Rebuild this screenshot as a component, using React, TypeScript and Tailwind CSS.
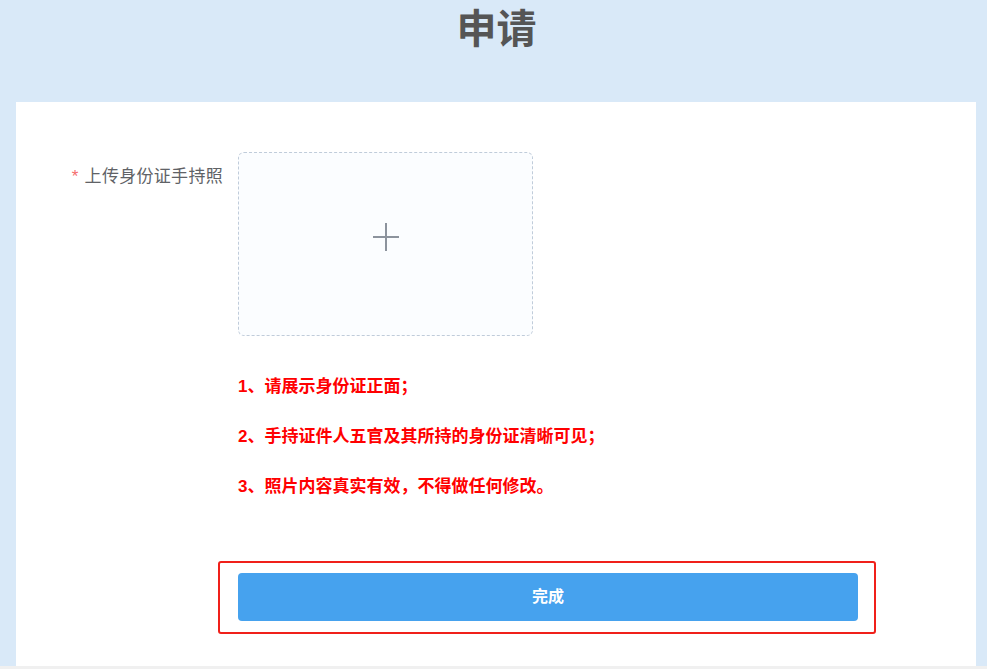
const tips = [
  '1、请展示身份证正面；',
  '2、手持证件人五官及其所持的身份证清晰可见；',
  '3、照片内容真实有效，不得做任何修改。',
]

function PlusMark() {
  return (
    <svg width="28" height="28" viewBox="0 0 28 28" className="-mt-[14px]">
      <path d="M14 0v28M1 14h26" stroke="#8c939d" strokeWidth="2" fill="none" />
    </svg>
  )
}

export default function App() {
  return (
    <div
      className="flex h-[669px] w-full flex-col bg-[#d9e9f8]"
      style={{ fontFamily: '"Liberation Sans", "Noto Sans CJK SC", sans-serif' }}
    >
      <header className="flex h-[102px] shrink-0 justify-center pl-[6px] pt-[7px]">
        <h1 className="text-[40px] font-bold leading-[44px] text-[#555555]">申请</h1>
      </header>

      <main className="ml-4 mr-[11px] h-[564px] bg-white pt-[50px]">
        <div className="flex">
          <label className="w-[222px] shrink-0 pr-[15px] pt-[14px] text-right text-[17px] leading-[22px] tracking-[0.3px] text-[#606266]">
            <span className="mr-[6px] text-[#f56c6c]">*</span>
            上传身份证手持照
          </label>

          <div className="flex flex-col">
            <button className="flex h-[184px] w-[295px] items-center justify-center rounded-[6px] border border-dashed border-[#c0ccda] bg-[#fbfdff]">
              <PlusMark />
            </button>

            <ul className="mt-[39px] flex flex-col gap-[27px]">
              {tips.map((t) => (
                <li key={t} className="text-[17px] font-bold leading-[23px] text-[#ff0000]">
                  {t}
                </li>
              ))}
            </ul>

            {/* highlighted submit area */}
            <div className="-ml-5 mt-[63px] w-[658px] rounded-[3px] border-2 border-[#f0201a] pb-[11px] pl-[18px] pr-[16px] pt-[10px]">
              <button className="h-[48px] w-[620px] rounded-[4px] bg-[#46a2ee] text-[16px] font-bold text-white">
                完成
              </button>
            </div>
          </div>
        </div>
      </main>

      <div className="flex-1 bg-[#f0f0f0]" />
    </div>
  )
}
